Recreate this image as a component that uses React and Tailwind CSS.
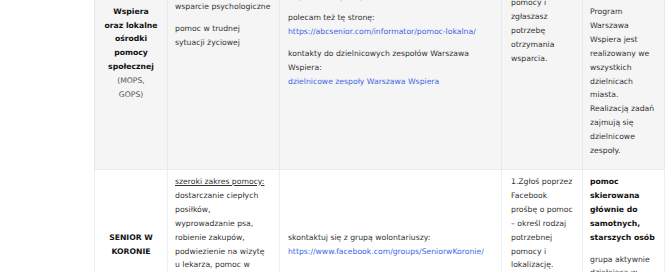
const linkCls = 'text-[#4068e2]';

function Lines({ lines, className = '' }) {
  return (
    <p className={className}>
      {lines.map((line, i) => (
        <span key={i} className="block whitespace-nowrap">
          {line}
        </span>
      ))}
    </p>
  );
}

const App = () => {
  return (
    <div className="w-[669px] h-[272px] overflow-hidden bg-white font-['DejaVu_Sans',Verdana,sans-serif] text-[7.7px] leading-[13.9px] text-[#333]">
      <div className="ml-[94px] w-[571px]">
        {/* wiersz: Warszawa Wspiera / MOPS */}
        <div className="grid grid-cols-[74px_112px_222px_81px_82px] grid-rows-[169px] bg-[#f5f5f5] border-b border-[#ececec]">
          <div className="min-h-0 flex flex-col justify-end items-center text-center pb-[67px] border-x border-[#e8e8e8]">
            <Lines className="font-bold text-[#111]" lines={['Program', 'Warszawa', 'Wspiera', 'oraz lokalne', 'ośrodki', 'pomocy', 'społecznej']} />
            <Lines className="text-[#555]" lines={['(MOPS,', 'GOPS)']} />
          </div>
          <div className="min-h-0 flex flex-col justify-end pl-[7px] pb-[119px] border-r border-[#e8e8e8] space-y-[8px]">
            <Lines lines={['pomoc w codziennych', 'sprawach']} />
            <Lines lines={['wsparcie psychologiczne']} />
            <Lines lines={['pomoc w trudnej', 'sytuacji życiowej']} />
          </div>
          <div className="min-h-0 flex flex-col justify-end pl-[8px] pb-[80px] border-r border-[#e8e8e8] space-y-[8px]">
            <Lines lines={['znajdziesz na stronie:', <span className={linkCls}>https://wawa.pl/wspiera/</span>]} />
            <Lines lines={['polecam też tę stronę:', <span className={linkCls}>https://abcsenior.com/informator/pomoc-lokalna/</span>]} />
            <Lines lines={['kontakty do dzielnicowych zespołów Warszawa', 'Wspiera:', <span className={linkCls}>dzielnicowe zespoły Warszawa Wspiera</span>]} />
          </div>
          <div className="min-h-0 flex flex-col justify-end pl-[9px] pb-[103px] border-r border-[#e8e8e8]">
            <Lines lines={['określasz rodzaj', 'potrzebnej', 'pomocy i', 'zgłaszasz', 'potrzebę', 'otrzymania', 'wsparcia.']} />
          </div>
          <div className="min-h-0 flex flex-col justify-end pl-[7px] pb-[11px] border-r border-[#e8e8e8] space-y-[8px]">
            <Lines lines={['dla osób', 'starszych']} />
            <Lines lines={['Program', 'Warszawa', 'Wspiera jest', 'realizowany we', 'wszystkich', 'dzielnicach', 'miasta.', 'Realizacją zadań', 'zajmują się', 'dzielnicowe', 'zespoły.']} />
          </div>
        </div>

        {/* wiersz: Senior w Koronie */}
        <div className="grid grid-cols-[74px_112px_222px_81px_82px] bg-white">
          <div className="flex flex-col justify-center items-center text-center border-x border-[#efefef]">
            <Lines className="font-bold text-[#111]" lines={['SENIOR W', 'KORONIE']} />
          </div>
          <div className="pl-[7px] pt-[5px] pb-[5px] border-r border-[#efefef]">
            <Lines
              lines={[
                <span className="underline">szeroki zakres pomocy:</span>,
                'dostarczanie ciepłych',
                'posiłków,',
                'wyprowadzanie psa,',
                'robienie zakupów,',
                'podwiezienie na wizytę',
                'u lekarza, pomoc w',
                'załatwianiu spraw',
                'urzędowych, rozmowy',
                'telefoniczne',
              ]}
            />
          </div>
          <div className="flex flex-col justify-center pl-[8px] border-r border-[#efefef]">
            <Lines lines={['skontaktuj się z grupą wolontariuszy:', <span className={linkCls}>https://www.facebook.com/groups/SeniorwKoronie/</span>]} />
          </div>
          <div className="pl-[9px] pt-[5px] border-r border-[#efefef]">
            <Lines lines={['1.Zgłoś poprzez', 'Facebook', 'prośbę o pomoc', '– określ rodzaj', 'potrzebnej', 'pomocy i', 'lokalizację.']} />
          </div>
          <div className="pl-[7px] pt-[5px] border-r border-[#efefef] space-y-[8px]">
            <Lines className="font-bold text-[#111]" lines={['pomoc', 'skierowana', 'głównie do', 'samotnych,', 'starszych osób']} />
            <Lines lines={['grupa aktywnie', 'działająca w', 'Warszawie']} />
          </div>
        </div>
      </div>
    </div>
  );
};

export default App;
